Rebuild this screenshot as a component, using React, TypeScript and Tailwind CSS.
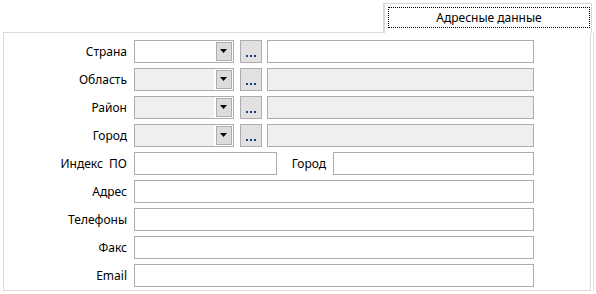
import React from "react";

const font = { fontFamily: '"Noto Sans", "Open Sans", sans-serif' };

function Combo({ disabled }: { disabled?: boolean }) {
  return (
    <div className="flex h-[23px] w-[100px] border border-[#adadad] bg-white">
      <div className={disabled ? "flex-1 bg-[#efefef] mr-[2px]" : "flex-1 mr-[2px]"} />
      <div className="mt-px mr-px h-[19px] w-[16px] border border-[#adadad] bg-[#dcdcdc] flex items-center justify-center">
        <svg width="8" height="5" viewBox="0 0 8 5">
          <polygon points="0,0 7,0 3.5,4" fill="#000" />
        </svg>
      </div>
    </div>
  );
}

function Dots() {
  return (
    <div className="ml-[6px] h-[23px] w-[22px] border border-[#adadad] bg-[#e1e1e1] flex items-end justify-center pb-[5px] gap-[2px]">
      <span className="block h-[2px] w-[2px] bg-[#1c3f78]" />
      <span className="block h-[2px] w-[2px] bg-[#1c3f78]" />
      <span className="block h-[2px] w-[2px] bg-[#1c3f78]" />
    </div>
  );
}

function Label({ children }: { children: React.ReactNode }) {
  return (
    <div className="w-[123px] mr-[7px] text-right text-[12px] leading-[16px] text-black whitespace-pre">
      {children}
    </div>
  );
}

function Input({ w, disabled }: { w: string; disabled?: boolean }) {
  return (
    <div
      className={
        "h-[23px] border border-[#adadad] " +
        w +
        (disabled ? " bg-[#efefef]" : " bg-white")
      }
    />
  );
}

function ComboRow({ label, disabled }: { label: string; disabled?: boolean }) {
  return (
    <div className="flex items-center h-[23px] mb-[5px]">
      <Label>{label}</Label>
      <Combo disabled={disabled} />
      <Dots />
      <div className="ml-[5px]">
        <Input w="w-[267px]" disabled={disabled} />
      </div>
    </div>
  );
}

function TextRow({ label }: { label: string }) {
  return (
    <div className="flex items-center h-[23px] mb-[5px]">
      <Label>{label}</Label>
      <Input w="w-[400px]" />
    </div>
  );
}

export default function App() {
  return (
    <div className="relative w-[596px] h-[294px] bg-white overflow-hidden" style={font}>
      <div className="flex justify-end pt-[3px] pr-[4px]">
        <div className="relative z-10 -mb-px h-[30px] w-[209px] border border-b-0 border-l-2 border-[#d9d9d9] bg-white pt-[3px] pl-[3px] pr-[1px]">
          <div className="h-[21px] border border-dotted border-black flex items-center justify-center text-[12px] text-black">
            Адресные данные
          </div>
        </div>
      </div>
      <div className="ml-[3px] w-[588px] h-[259px] border border-[#dadada] pt-[7px]">
        <ComboRow label="Страна" />
        <ComboRow label="Область" disabled />
        <ComboRow label="Район" disabled />
        <ComboRow label="Город" disabled />
        <div className="flex items-center h-[23px] mb-[5px]">
          <Label>{"Индекс  ПО"}</Label>
          <Input w="w-[143px]" />
          <div className="w-[49px] mr-[7px] text-right text-[12px] text-black">Город</div>
          <Input w="w-[201px]" />
        </div>
        <TextRow label="Адрес" />
        <TextRow label="Телефоны" />
        <TextRow label="Факс" />
        <TextRow label="Email" />
      </div>
      <div className="absolute right-[2px] top-[32px] h-[260px] w-px bg-[#e3e3e3]" />
    </div>
  );
}
